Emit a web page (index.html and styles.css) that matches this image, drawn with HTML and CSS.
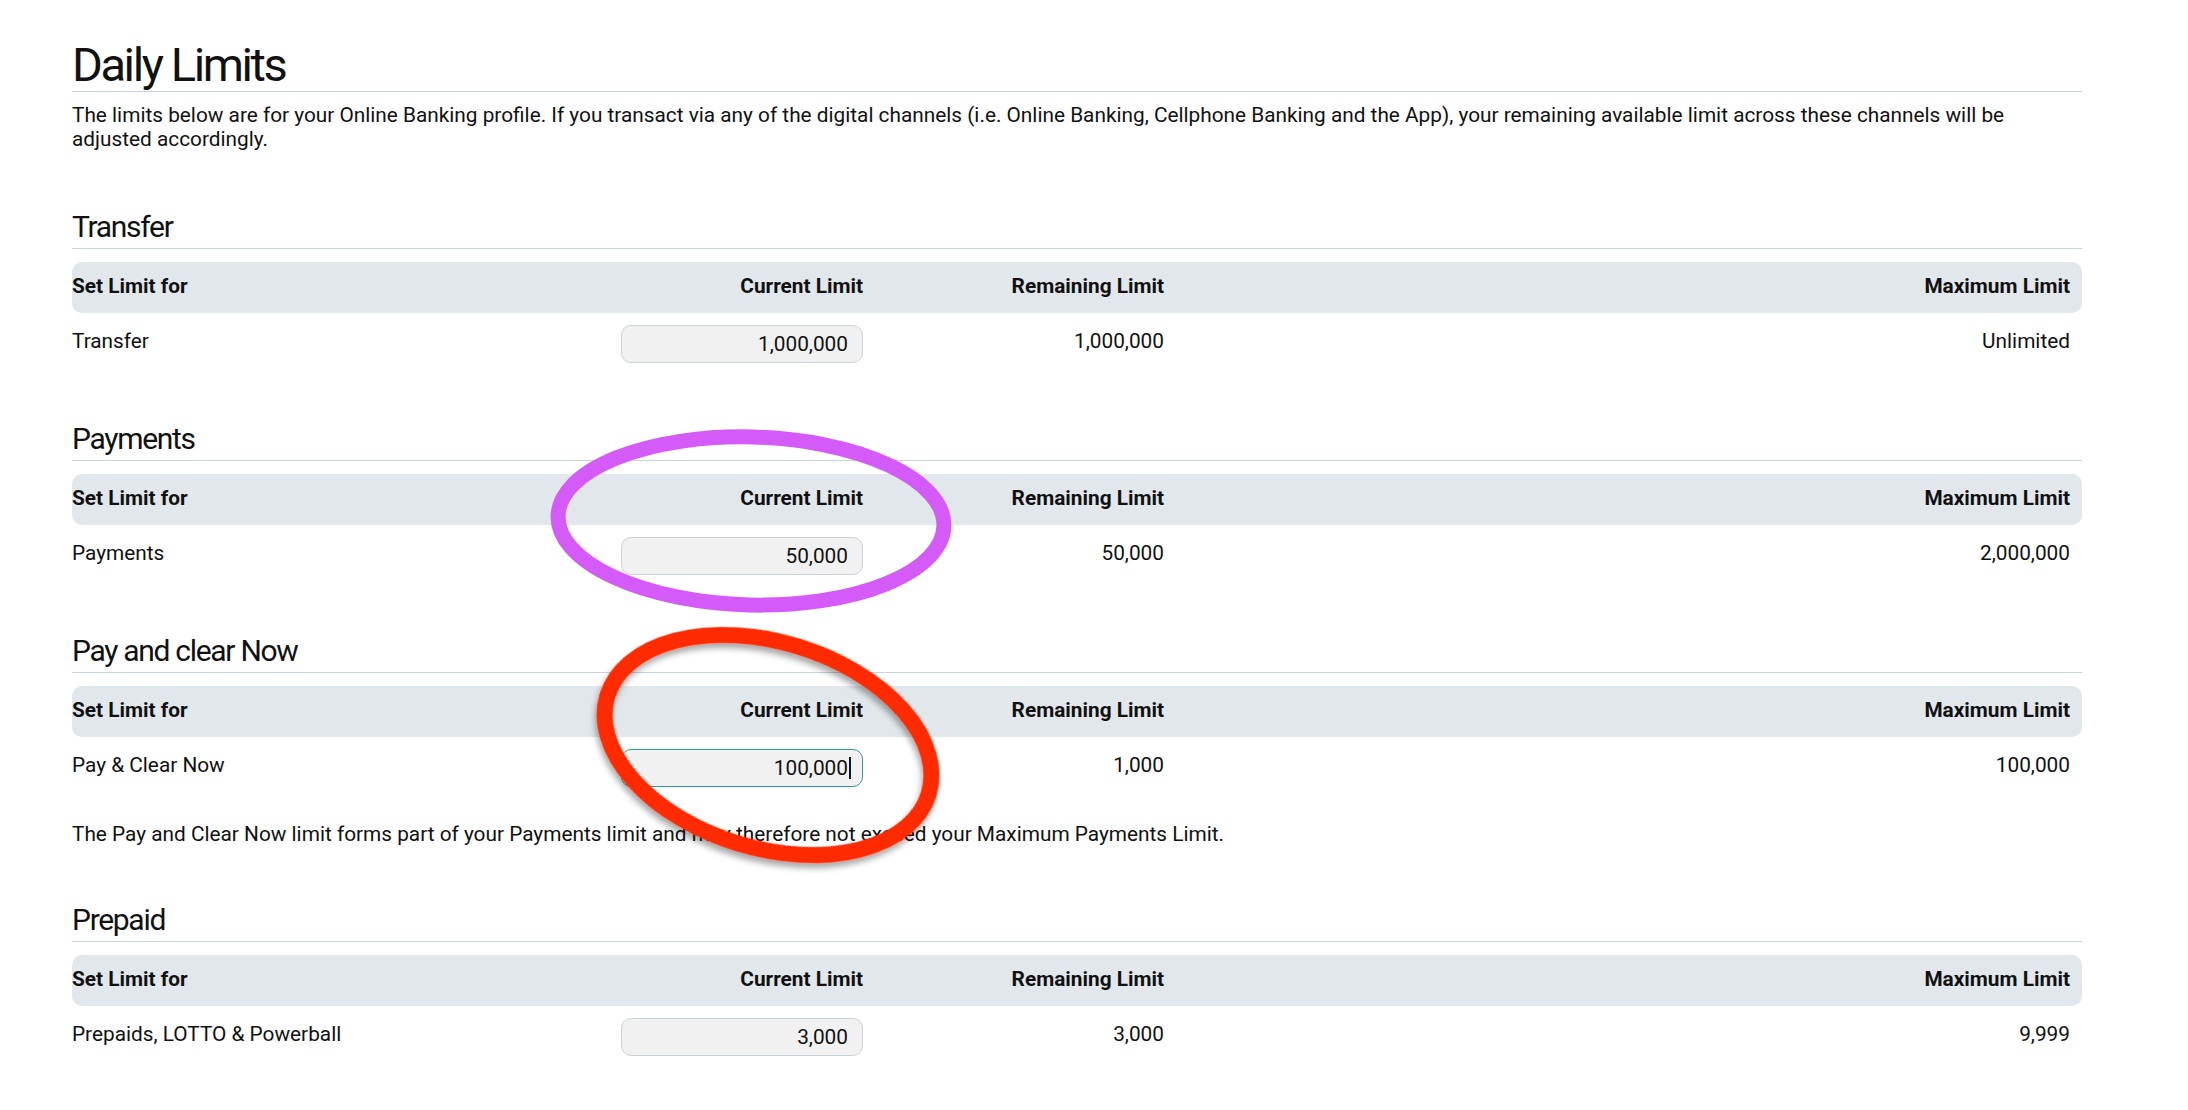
FILE: index.html
```html
<!DOCTYPE html>
<html lang="en">
<head>
    <meta charset="UTF-8">
    <meta name="viewport" content="width=device-width, initial-scale=1.0">
    <title>Daily Limits</title>
    <link rel="stylesheet" href="styles.css">
</head>
<body>
    <div class="page">
        <h1 class="page-title">Daily Limits</h1>
        <p class="intro">The limits below are for your Online Banking profile. If you transact via any of the digital channels (i.e. Online Banking, Cellphone Banking and the App), your remaining available limit across these channels will be adjusted accordingly.</p>

        <section class="limit-section">
            <h2 class="section-title">Transfer</h2>
            <div class="limit-grid limit-head">
                <div>Set Limit for</div>
                <div class="num">Current Limit</div>
                <div class="num">Remaining Limit</div>
                <div class="num">Maximum Limit</div>
            </div>
            <div class="limit-grid limit-row">
                <div class="cell">Transfer</div>
                <div class="field"><input class="limit-input" type="text" value="1,000,000"></div>
                <div class="cell num">1,000,000</div>
                <div class="cell num">Unlimited</div>
            </div>
        </section>

        <section class="limit-section">
            <h2 class="section-title">Payments</h2>
            <div class="limit-grid limit-head">
                <div>Set Limit for</div>
                <div class="num">Current Limit</div>
                <div class="num">Remaining Limit</div>
                <div class="num">Maximum Limit</div>
            </div>
            <div class="limit-grid limit-row">
                <div class="cell">Payments</div>
                <div class="field"><input class="limit-input" type="text" value="50,000"></div>
                <div class="cell num">50,000</div>
                <div class="cell num">2,000,000</div>
            </div>
        </section>

        <section class="limit-section">
            <h2 class="section-title">Pay and clear Now</h2>
            <div class="limit-grid limit-head">
                <div>Set Limit for</div>
                <div class="num">Current Limit</div>
                <div class="num">Remaining Limit</div>
                <div class="num">Maximum Limit</div>
            </div>
            <div class="limit-grid limit-row">
                <div class="cell">Pay &amp; Clear Now</div>
                <div class="field">
                    <input class="limit-input is-active" type="text" value="100,000">
                    <span class="caret"></span>
                </div>
                <div class="cell num">1,000</div>
                <div class="cell num">100,000</div>
            </div>
            <p class="note">The Pay and Clear Now limit forms part of your Payments limit and may therefore not exceed your Maximum Payments Limit.</p>
        </section>

        <section class="limit-section">
            <h2 class="section-title">Prepaid</h2>
            <div class="limit-grid limit-head">
                <div>Set Limit for</div>
                <div class="num">Current Limit</div>
                <div class="num">Remaining Limit</div>
                <div class="num">Maximum Limit</div>
            </div>
            <div class="limit-grid limit-row">
                <div class="cell">Prepaids, LOTTO &amp; Powerball</div>
                <div class="field"><input class="limit-input" type="text" value="3,000"></div>
                <div class="cell num">3,000</div>
                <div class="cell num">9,999</div>
            </div>
        </section>
    </div>

    <!-- hand drawn highlight marks over the page -->
    <svg class="marks" viewBox="0 0 2188 1110" width="2188" height="1110">
        <defs>
            <filter id="mark-shadow" x="-20%" y="-20%" width="140%" height="150%">
                <feDropShadow dx="0" dy="5" stdDeviation="3" flood-color="#000" flood-opacity="0.35"/>
            </filter>
        </defs>
        <ellipse cx="751" cy="521" rx="193" ry="84" transform="rotate(1.5 751 521)"
                 fill="none" stroke="#d55bf9" stroke-width="15"/>
        <ellipse cx="768" cy="745" rx="168" ry="103" transform="rotate(17 768 745)"
                 fill="none" stroke="#fe2905" stroke-width="16" filter="url(#mark-shadow)"/>
    </svg>
</body>
</html>
```

FILE: styles.css
```css
body {
    margin: 0;
    position: relative;
    font-family: Roboto, "Liberation Sans", sans-serif;
    font-size: 20.8px;
    line-height: 20px;
    color: #111;
    background: #fff;
}
.page {
    padding: 39px 106px 30px 72px;
}
.page-title {
    margin: 0;
    font-size: 47px;
    line-height: 52px;
    font-weight: 400;
    letter-spacing: -2.4px;
    border-bottom: 1px solid #c5d5dc;
}
.intro {
    margin: 11px 0 0;
    line-height: 24px;
}
.limit-section {
    margin-top: 60px;
}
.section-title {
    margin: 0;
    padding-bottom: 5px;
    font-size: 30px;
    line-height: 32px;
    font-weight: 400;
    letter-spacing: -1.3px;
    border-bottom: 1px solid #c5d5dc;
}
.limit-grid {
    display: grid;
    grid-template-columns: 549px 242px 301px 1fr;
    padding-right: 12px;
}
.limit-head {
    margin-top: 13px;
    height: 51px;
    box-sizing: border-box;
    padding-bottom: 3px;
    align-items: center;
    background: #e2e7eb;
    border-radius: 10px;
    font-weight: 700;
}
.limit-row {
    margin-top: 12px;
}
.limit-row .cell {
    padding-top: 6px;
}
.num {
    text-align: right;
}
.field {
    position: relative;
}
.limit-input {
    display: block;
    box-sizing: border-box;
    width: 100%;
    height: 38px;
    margin: 0;
    padding: 0 14px 0 10px;
    border: 1px solid #c9d4da;
    border-radius: 10px;
    background: #f1f1f1;
    font: inherit;
    color: #111;
    text-align: right;
    outline: none;
}
.limit-input.is-active {
    border-color: #2b9c9c;
}
.caret {
    position: absolute;
    right: 12px;
    top: 8px;
    width: 2px;
    height: 22px;
    background: #111;
}
.note {
    margin: 37px 0 0;
}
.marks {
    position: absolute;
    top: 0;
    left: 0;
    pointer-events: none;
}
```
